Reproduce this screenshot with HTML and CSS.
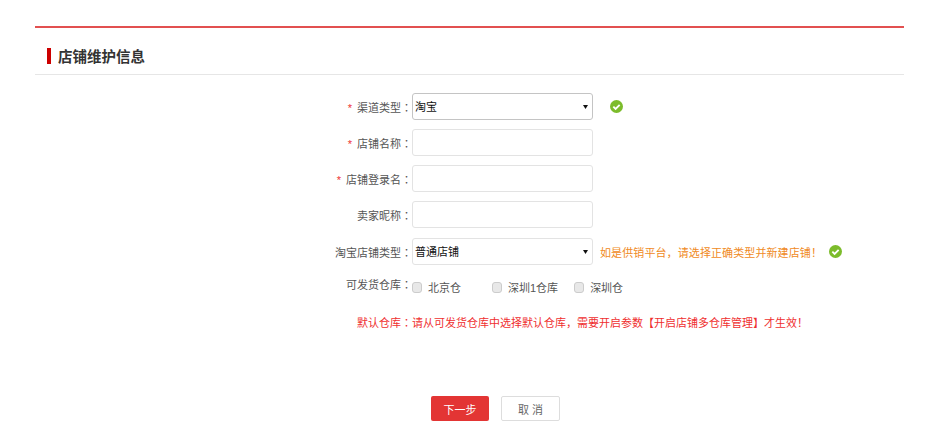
FILE: index.html
```html
<!DOCTYPE html>
<html lang="zh-CN">
<head>
<meta charset="utf-8">
<title>店铺维护信息</title>
<link rel="stylesheet" href="styles.css">
</head>
<body>
<main class="panel">
  <h2 class="section-title"><span class="title-text">店铺维护信息</span></h2>
  <form class="form">
    <div class="row">
      <label class="label"><span class="req">*</span> 渠道类型<span class="colon" lang="zh-TW">：</span></label>
      <select class="control select strong"><option>淘宝</option></select>
      <svg class="ok ok-first" viewBox="0 0 14 14"><circle cx="7" cy="7" r="7" fill="#7cbc2b"/><path d="M3.6 7.2l2.4 2.4 4.4-4.4" fill="none" stroke="#fff" stroke-width="2"/></svg>
    </div>
    <div class="row">
      <label class="label"><span class="req">*</span> 店铺名称<span class="colon" lang="zh-TW">：</span></label>
      <input class="control" type="text">
    </div>
    <div class="row">
      <label class="label"><span class="req">*</span> 店铺登录名<span class="colon" lang="zh-TW">：</span></label>
      <input class="control" type="text">
    </div>
    <div class="row row-nick">
      <label class="label">卖家昵称<span class="colon" lang="zh-TW">：</span></label>
      <input class="control" type="text">
    </div>
    <div class="row">
      <label class="label">淘宝店铺类型<span class="colon" lang="zh-TW">：</span></label>
      <select class="control select"><option>普通店铺</option></select>
      <span class="hint">如是供销平台，请选择正确类型并新建店铺！</span>
      <svg class="ok" viewBox="0 0 14 14"><circle cx="7" cy="7" r="7" fill="#7cbc2b"/><path d="M3.6 7.2l2.4 2.4 4.4-4.4" fill="none" stroke="#fff" stroke-width="2"/></svg>
    </div>
    <div class="row row-checks">
      <label class="label">可发货仓库<span class="colon" lang="zh-TW">：</span></label>
      <div class="checks">
        <label class="check check-a"><input type="checkbox" class="box">北京仓</label>
        <label class="check check-b"><input type="checkbox" class="box">深圳1仓库</label>
        <label class="check"><input type="checkbox" class="box">深圳仓</label>
      </div>
    </div>
    <div class="row row-default">
      <label class="label label-red">默认仓库<span class="colon" lang="zh-TW">：</span></label>
      <span class="notice">请从可发货仓库中选择默认仓库，需要开启参数【开启店铺多仓库管理】才生效！</span>
    </div>
    <div class="actions">
      <button type="button" class="btn btn-primary">下一步</button>
      <button type="button" class="btn btn-default">取 消</button>
    </div>
  </form>
</main>
</body>
</html>
```
FILE: styles.css
```css
html, body {
  margin: 0;
  padding: 0;
  background: #fff;
}
body {
  font-family: "Liberation Sans", "Noto Sans CJK SC", sans-serif;
  font-size: 11px;
  color: #555;
}
.panel {
  margin: 26px 33px 0 35px;
  border-top: 2px solid #e25050;
}
.section-title {
  margin: 0;
  padding: 20px 0 10px 12px;
  border-bottom: 1px solid #e6e6e6;
  height: 16px;
  font-size: 14.5px;
  font-weight: bold;
  color: #333;
}
.title-text {
  display: block;
  border-left: 4px solid #cc0000;
  padding-left: 7px;
  height: 16px;
  line-height: 18px;
}
.form {
  padding-top: 18px;
}
.row {
  display: flex;
  align-items: center;
  height: 27px;
  margin-bottom: 9px;
}
.row-nick {
  margin-bottom: 10px;
}
.label {
  width: 377px;
  flex: none;
  text-align: right;
  white-space: nowrap;
  font-size: 11px;
  color: #555;
}
.colon {
  font-family: "Noto Sans CJK TC", sans-serif;
}
.req {
  color: #e33;
  margin-right: 2px;
}
.control {
  box-sizing: border-box;
  width: 181px;
  height: 27px;
  margin: 0;
  padding: 0 2px;
  border: 1px solid #e3e3e3;
  border-radius: 3px;
  background-color: #fff;
  font-family: inherit;
  font-size: 11px;
  color: #111;
}
.select {
  appearance: none;
  background-image: url("data:image/svg+xml,%3Csvg xmlns='http://www.w3.org/2000/svg' width='5' height='4'%3E%3Cpath d='M0 0h5L2.5 4z' fill='%23111'/%3E%3C/svg%3E");
  background-repeat: no-repeat;
  background-position: right 4px center;
}
.select.strong {
  border-color: #c4c4c4;
}
.ok {
  width: 13px;
  height: 13px;
  margin-left: 7px;
}
.ok-first {
  margin-left: 17px;
}
.hint {
  margin-left: 7px;
  color: #f08a24;
  letter-spacing: 0.1px;
  white-space: nowrap;
}
.row-checks {
  height: auto;
  align-items: flex-start;
  margin-top: 11px;
  margin-bottom: 0;
}
.checks {
  display: flex;
}
.check {
  display: flex;
  align-items: center;
  margin-right: 15px;
  margin-top: 3px;
  white-space: nowrap;
}
.check-a {
  margin-right: 31px;
}
.check-b {
  margin-right: 16px;
}
.box {
  appearance: none;
  box-sizing: border-box;
  width: 10px;
  height: 11px;
  margin: 0 6px 0 0;
  border: 1px solid #ccc;
  border-radius: 3px;
  background: #e8e8e8;
}
.row-default {
  height: auto;
  margin: 19px 0 0;
}
.label-red, .notice {
  color: #ef2f2f;
}
.actions {
  display: flex;
  justify-content: center;
  gap: 12px;
  margin-top: 66px;
  padding-left: 52px;
}
.btn {
  box-sizing: border-box;
  height: 25px;
  padding: 0;
  border-radius: 2px;
  font-family: inherit;
  font-size: 11px;
}
.btn-primary {
  width: 58px;
  border: 0;
  background: #e33534;
  color: #fff;
}
.btn-default {
  width: 59px;
  border: 1px solid #ddd;
  background: #fff;
  color: #666;
}
```
